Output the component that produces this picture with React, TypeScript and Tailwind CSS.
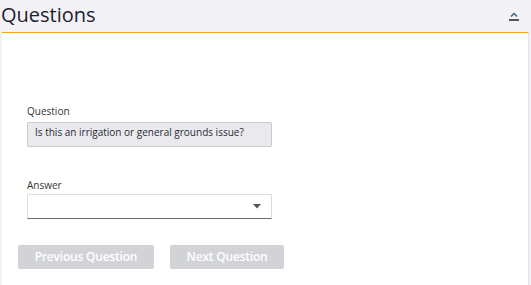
export default function App() {
  return (
    <div className="w-[531px] h-[285px] bg-[#f2f1f6] flex flex-col overflow-hidden font-['Open_Sans',sans-serif]">
      {/* header */}
      <div className="h-[32px] flex items-center justify-between pr-[11px]">
        <h2 className="text-[20px] leading-[28px] text-[#1b2130] pl-[1px] -mt-[3px]">Questions</h2>
        <button className="flex flex-col items-center text-[#4a4a4a]">
          <svg width="12" height="10" viewBox="0 0 12 10">
            <path d="M3 5.5 L6 2.5 L9 5.5" fill="none" stroke="#3b5b86" strokeWidth="1.4" />
            <rect x="1" y="8" width="10" height="2" fill="#555" />
          </svg>
        </button>
      </div>

      {/* panel */}
      <div className="mx-[2px] flex-1 border-t border-[#f7a21b] bg-white border-r border-r-[#e4e4ea] pt-[71px]">
        <div className="pl-[25px]">
          <label className="block text-[10px] leading-[14px] text-[#333]">Question</label>
          <div className="mt-[4px] w-[245px] h-[25px] bg-[#e9e9ee] border border-[#c9c9cf] rounded-[2px] pl-[7px] text-[10px] leading-[14px] text-[#2b2b33] pt-[2px]">
            Is this an irrigation or general grounds issue?
          </div>

          <label className="block mt-[31px] text-[10px] leading-[14px] text-[#333]">Answer</label>
          <div className="mt-[2px] w-[245px] h-[25px] bg-white border border-[#dcdce0] border-b-[#6b6b70] rounded-t-[2px] flex items-center justify-end pr-[10px]">
            <svg width="8" height="5" viewBox="0 0 8 5">
              <path d="M0 0 L8 0 L4 4.5 Z" fill="#555" />
            </svg>
          </div>
        </div>

        <div className="mt-[26px] pl-[16px] flex gap-[16px]">
          <button className="w-[136px] h-[24px] bg-[#d2d3d7] rounded-[2px] text-white font-semibold text-[12px] leading-[24px] tracking-[-0.2px]">
            Previous Question
          </button>
          <button className="w-[114px] h-[24px] bg-[#d2d3d7] rounded-[2px] text-white font-semibold text-[12px] leading-[24px] tracking-[-0.2px]">
            Next Question
          </button>
        </div>
      </div>
    </div>
  );
}
